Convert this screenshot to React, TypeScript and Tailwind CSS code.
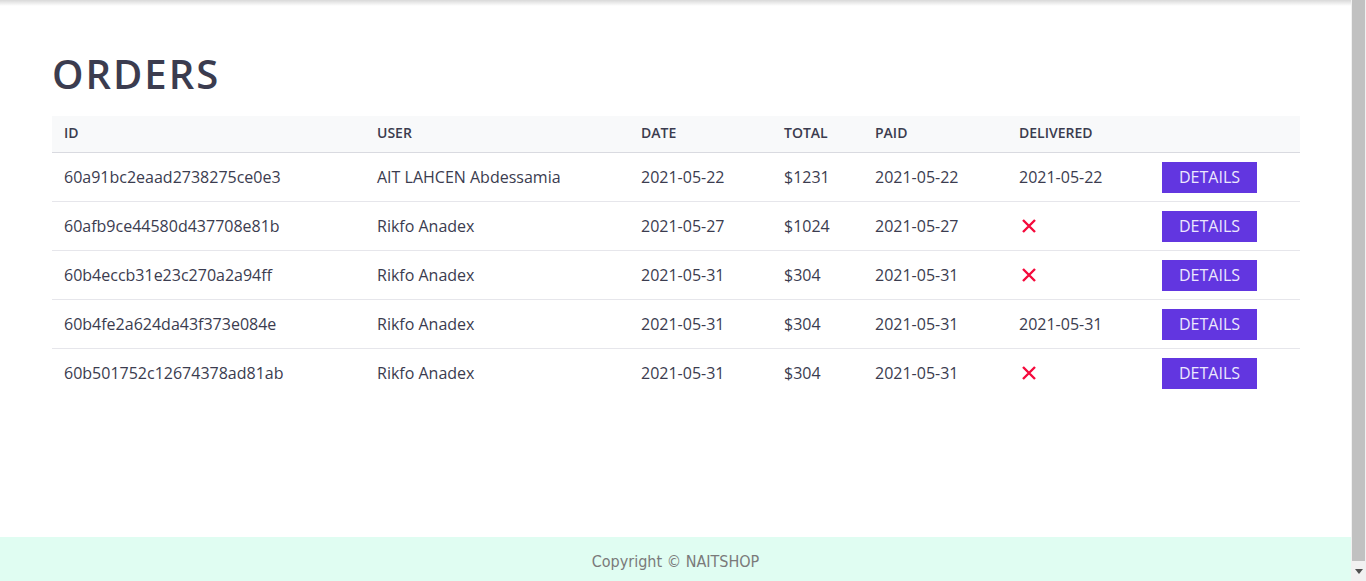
import React from "react";

const orders = [
  { id: "60a91bc2eaad2738275ce0e3", user: "AIT LAHCEN Abdessamia", date: "2021-05-22", total: "$1231", paid: "2021-05-22", delivered: "2021-05-22" },
  { id: "60afb9ce44580d437708e81b", user: "Rikfo Anadex", date: "2021-05-27", total: "$1024", paid: "2021-05-27", delivered: null },
  { id: "60b4eccb31e23c270a2a94ff", user: "Rikfo Anadex", date: "2021-05-31", total: "$304", paid: "2021-05-31", delivered: null },
  { id: "60b4fe2a624da43f373e084e", user: "Rikfo Anadex", date: "2021-05-31", total: "$304", paid: "2021-05-31", delivered: "2021-05-31" },
  { id: "60b501752c12674378ad81ab", user: "Rikfo Anadex", date: "2021-05-31", total: "$304", paid: "2021-05-31", delivered: null },
];

const cols = "grid grid-cols-[313px_264px_143px_91px_144px_143px_150px]";

function Cross() {
  return (
    <svg width="16" height="16" viewBox="0 0 16 16" className="ml-[2px]">
      <path d="M2 2 L14 14 M14 2 L2 14" stroke="#f50a3c" strokeWidth="2.4" strokeLinecap="butt" />
    </svg>
  );
}

export default function App() {
  return (
    <div className="flex h-[581px] w-full overflow-hidden bg-white" style={{ fontFamily: '"Open Sans", "Noto Sans", sans-serif' }}>
      <div className="flex flex-1 flex-col">
        <div className="h-[6px] bg-gradient-to-b from-black/15 to-transparent" />
        <main className="flex-1 pl-[52px]">
          <h1 className="mt-[44px] mb-[18px] text-[40px] leading-[48px] font-semibold tracking-[2px] text-[#3b3c4f]">ORDERS</h1>
          <div className="w-[1248px] text-[#3b3c4f]">
            <div className={`${cols} h-[37px] items-center border-b border-[#d9dae0] bg-[#f8f9fa] pb-[4px] text-[14px] font-semibold`}>
              <div className="pl-3">ID</div>
              <div className="pl-3">USER</div>
              <div className="pl-3">DATE</div>
              <div className="pl-3">TOTAL</div>
              <div className="pl-3">PAID</div>
              <div className="pl-3">DELIVERED</div>
              <div className="pl-3"></div>
            </div>
            {orders.map((o, i) => (
              <div key={o.id} className={`${cols} h-[48px] items-center text-[16px] ${i > 0 ? "box-content border-t border-[#e6e6eb]" : ""}`}>
                <div className="pl-3">{o.id}</div>
                <div className="pl-3">{o.user}</div>
                <div className="pl-3">{o.date}</div>
                <div className="pl-3">{o.total}</div>
                <div className="pl-3">{o.paid}</div>
                <div className="flex pl-3">{o.delivered ? o.delivered : <Cross />}</div>
                <div className="pl-3">
                  <button className="flex h-[31px] w-[95px] items-center justify-center bg-[#6236e0] text-[16px] text-[#ece8fd]">DETAILS</button>
                </div>
              </div>
            ))}
          </div>
        </main>
        <footer className="flex h-[44px] items-center justify-center bg-[#e0fdf2] pt-[6px] text-[16px] text-[#7a7a7a]" style={{ fontFamily: '"DejaVu Sans Condensed", "DejaVu Sans", sans-serif' }}>
          Copyright © NAITSHOP
        </footer>
      </div>
      <div className="flex w-[15px] flex-col bg-[#f1f1f1]">
        <div className="mx-[1px] h-[561px] bg-[#c1c1c1]" />
        <div className="flex flex-1 items-center justify-center">
          <svg width="8" height="5" viewBox="0 0 8 5"><path d="M0 0 H8 L4 5 Z" fill="#505050" /></svg>
        </div>
      </div>
    </div>
  );
}
